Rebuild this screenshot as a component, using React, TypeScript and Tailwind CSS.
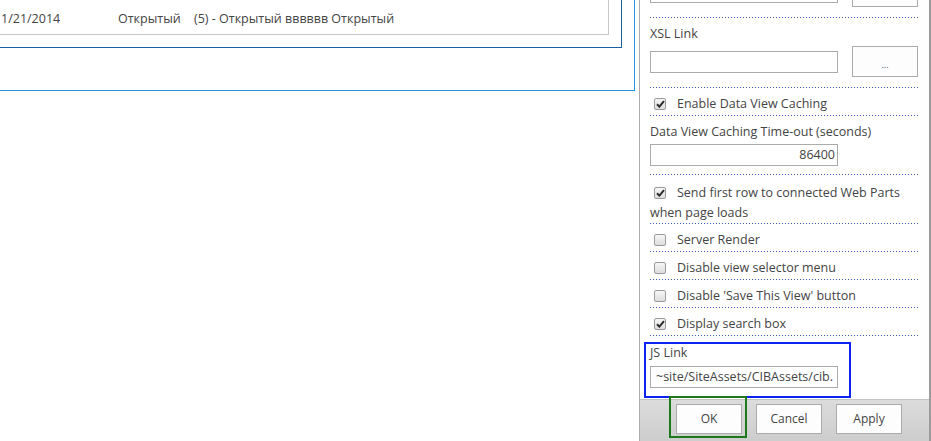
import type { ReactNode } from "react";

const font = "font-['Open_Sans',sans-serif]";

function Dots() {
  return (
    <div className="h-px w-full bg-[linear-gradient(to_right,#3a5cb8_1px,transparent_1px)] bg-[length:3px_1px]" />
  );
}

function Box({ checked }: { checked: boolean }) {
  return (
    <span className="ml-[4px] flex h-[12px] w-[12px] shrink-0 items-center justify-center rounded-[2px] border border-[#9a9a9a] bg-[linear-gradient(#f6f6f6,#dedede)]">
      {checked && (
        <svg width="9" height="8" viewBox="0 0 9 8">
          <path d="M1 4.2 L3.4 6.6 L8 1.2" fill="none" stroke="#2b2b2b" strokeWidth="2" />
        </svg>
      )}
    </span>
  );
}

function CheckRow({ checked, children }: { checked: boolean; children: ReactNode }) {
  return (
    <div className="flex h-[27px] items-center gap-[11px] pt-[5px]">
      <Box checked={checked} />
      <span className="leading-[18px]">{children}</span>
    </div>
  );
}

function Input({ value, right }: { value?: string; right?: boolean }) {
  return (
    <div
      className={`flex h-[22px] w-[188px] items-center overflow-hidden whitespace-nowrap border border-[#ababab] bg-white text-[#444] ${
        right ? "justify-end pr-[2px]" : "px-[5px]"
      }`}
    >
      {value}
    </div>
  );
}

function Btn({ label }: { label: string }) {
  return (
    <div className="flex h-[30px] w-[66px] items-center justify-center border border-[#ababab] bg-[#fdfdfd] text-[12px] text-[#444]">
      {label}
    </div>
  );
}

export default function App() {
  return (
    <div className={`flex h-[441px] w-[931px] overflow-hidden bg-white text-[12.5px] text-[#444] ${font}`}>
      <div className="w-[639px] shrink-0">
        <div className="h-[91px] w-[635px] border-r border-b border-[#2b8fd9] pr-[12px]">
          <div className="h-[48px] w-[622px] border-r border-b border-[#1b5e9e] pr-[12px]">
            <div className="flex h-[35px] w-[609px] items-center border-r border-b border-[#c8c8c8] pt-[4px] leading-[18px]">
              <span className="w-[118px] pl-[1px]">1/21/2014</span>
              <span className="w-[76px]">Открытый</span>
              <span>(5) - Открытый вввввв Открытый</span>
            </div>
          </div>
        </div>
      </div>

      <div className="flex h-[441px] w-[292px] shrink-0 flex-col border-l border-r-2 border-l-[#ababab] border-r-[#9b9b9b]">
        <div className="h-[399px] overflow-hidden pr-[11px] pl-[10px]">
          <div className="-mt-[24px] flex items-end justify-between">
            <div className="mb-[4px] h-[27px] w-[188px] border border-[#ababab]" />
            <div className="h-[31px] w-[66px] border border-[#ababab] bg-[#fdfdfd]" />
          </div>
          <div className="mt-[10px]">
            <Dots />
          </div>

          <div className="mt-[7px] leading-[18px]">XSL Link</div>
          <div className="mt-[3px] flex items-center justify-between">
            <Input />
            <div className="flex h-[31px] w-[66px] items-center justify-center border border-[#ababab] bg-[#fdfdfd] pt-[6px] text-[9px] leading-none text-[#555]">
              ...
            </div>
          </div>
          <div className="mt-[10px]">
            <Dots />
          </div>

          <CheckRow checked>Enable Data View Caching</CheckRow>
          <Dots />

          <div className="mt-[7px] leading-[18px]">Data View Caching Time-out (seconds)</div>
          <div className="mt-[3px]">
            <Input value="86400" right />
          </div>
          <div className="mt-[8px]">
            <Dots />
          </div>

          <div className="pt-[8px] leading-[20px]">
            <div className="flex items-center gap-[11px]">
              <Box checked />
              <span>Send first row to connected Web Parts</span>
            </div>
            <div>when page loads</div>
          </div>
          <Dots />

          <CheckRow checked={false}>Server Render</CheckRow>
          <Dots />
          <CheckRow checked={false}>Disable view selector menu</CheckRow>
          <Dots />
          <CheckRow checked={false}>Disable 'Save This View' button</CheckRow>
          <Dots />
          <CheckRow checked>Display search box</CheckRow>
          <Dots />

          <div className="-mx-[6px] mt-[6px] w-[207px] border-2 border-[#0b24f0] px-[4px] pt-[1px] pb-[8px]">
            <div className="leading-[16px]">JS Link</div>
            <div className="mt-[5px]">
              <Input value="~site/SiteAssets/CIBAssets/cib." />
            </div>
          </div>
        </div>

        <div className="flex flex-1 gap-[14px] border-t border-[#c4c4c4] bg-[linear-gradient(#dcdcdc,#cdcdcd)] pt-[4px] pl-[36px]">
          <div className="relative">
            <Btn label="OK" />
            <div className="absolute -top-[8px] -left-[7px] h-[42px] w-[78px] border-2 border-[#1c7a1c]" />
          </div>
          <Btn label="Cancel" />
          <Btn label="Apply" />
        </div>
      </div>
    </div>
  );
}
